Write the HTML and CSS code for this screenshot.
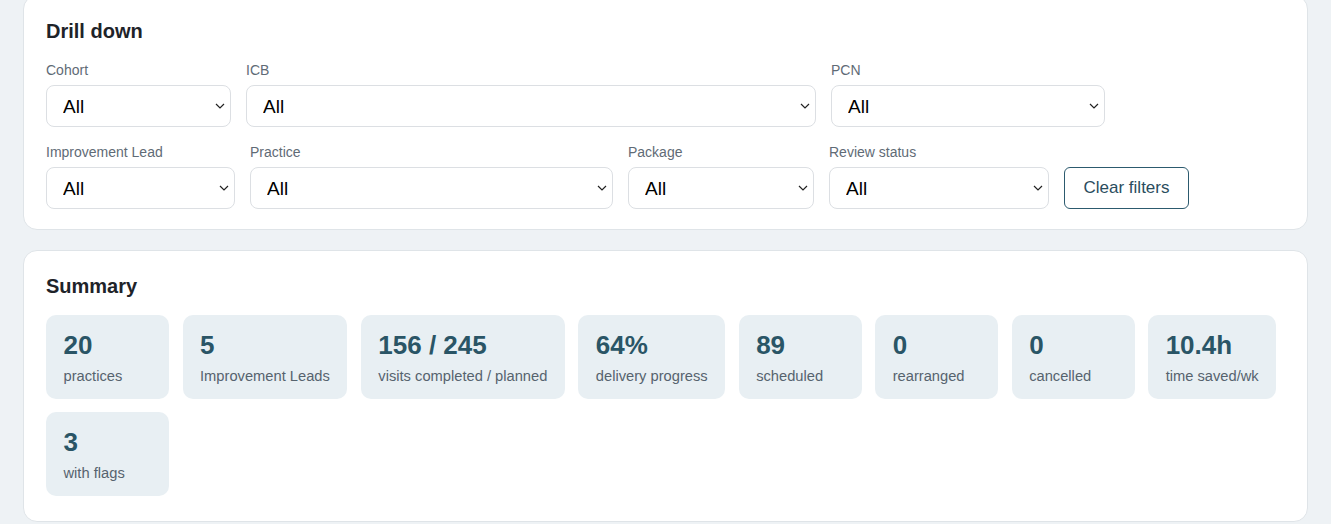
FILE: index.html
```html
<!DOCTYPE html>
<html>
<head>
  <title>Drill down</title>
  <link rel="stylesheet" href="styles.css">
</head>
<body>
  <div class="page">
    <section class="card filters-card">
      <h2>Drill down</h2>
      <div class="filter-row">
        <div class="field w-cohort">
          <label for="cohort">Cohort</label>
          <div class="select-wrap">
            <select id="cohort"><option>All</option></select>
            <svg class="chevron" viewBox="0 0 10 6" width="10" height="6"><path d="M1 1l4 4 4-4" fill="none" stroke="#222" stroke-width="1.2"/></svg>
          </div>
        </div>
        <div class="field w-icb">
          <label for="icb">ICB</label>
          <div class="select-wrap">
            <select id="icb"><option>All</option></select>
            <svg class="chevron" viewBox="0 0 10 6" width="10" height="6"><path d="M1 1l4 4 4-4" fill="none" stroke="#222" stroke-width="1.2"/></svg>
          </div>
        </div>
        <div class="field w-pcn">
          <label for="pcn">PCN</label>
          <div class="select-wrap">
            <select id="pcn"><option>All</option></select>
            <svg class="chevron" viewBox="0 0 10 6" width="10" height="6"><path d="M1 1l4 4 4-4" fill="none" stroke="#222" stroke-width="1.2"/></svg>
          </div>
        </div>
      </div>
      <div class="filter-row">
        <div class="field w-lead">
          <label for="lead">Improvement Lead</label>
          <div class="select-wrap">
            <select id="lead"><option>All</option></select>
            <svg class="chevron" viewBox="0 0 10 6" width="10" height="6"><path d="M1 1l4 4 4-4" fill="none" stroke="#222" stroke-width="1.2"/></svg>
          </div>
        </div>
        <div class="field w-practice">
          <label for="practice">Practice</label>
          <div class="select-wrap">
            <select id="practice"><option>All</option></select>
            <svg class="chevron" viewBox="0 0 10 6" width="10" height="6"><path d="M1 1l4 4 4-4" fill="none" stroke="#222" stroke-width="1.2"/></svg>
          </div>
        </div>
        <div class="field w-package">
          <label for="package">Package</label>
          <div class="select-wrap">
            <select id="package"><option>All</option></select>
            <svg class="chevron" viewBox="0 0 10 6" width="10" height="6"><path d="M1 1l4 4 4-4" fill="none" stroke="#222" stroke-width="1.2"/></svg>
          </div>
        </div>
        <div class="field w-review">
          <label for="review">Review status</label>
          <div class="select-wrap">
            <select id="review"><option>All</option></select>
            <svg class="chevron" viewBox="0 0 10 6" width="10" height="6"><path d="M1 1l4 4 4-4" fill="none" stroke="#222" stroke-width="1.2"/></svg>
          </div>
        </div>
        <button type="button" class="clear-btn">Clear filters</button>
      </div>
    </section>

    <section class="card summary-card">
      <h2>Summary</h2>
      <div class="stats">
        <div class="stat"><div class="stat-value">20</div><div class="stat-label">practices</div></div>
        <div class="stat"><div class="stat-value">5</div><div class="stat-label">Improvement Leads</div></div>
        <div class="stat"><div class="stat-value">156 / 245</div><div class="stat-label">visits completed / planned</div></div>
        <div class="stat"><div class="stat-value">64%</div><div class="stat-label">delivery progress</div></div>
        <div class="stat"><div class="stat-value">89</div><div class="stat-label">scheduled</div></div>
        <div class="stat"><div class="stat-value">0</div><div class="stat-label">rearranged</div></div>
        <div class="stat"><div class="stat-value">0</div><div class="stat-label">cancelled</div></div>
        <div class="stat"><div class="stat-value">10.4h</div><div class="stat-label">time saved/wk</div></div>
        <div class="stat"><div class="stat-value">3</div><div class="stat-label">with flags</div></div>
      </div>
    </section>
  </div>
</body>
</html>
```

FILE: styles.css
```css
* {
  box-sizing: border-box;
}
body {
  margin: 0;
  background-color: #eef2f5;
  font-family: "Liberation Sans", Arial, sans-serif;
  color: #1e2329;
}
.page {
  padding: 0 23px;
  margin-top: -5px;
  display: flex;
  flex-direction: column;
  gap: 20px;
}
.card {
  background-color: #fff;
  border: 1px solid #dfe4e8;
  border-radius: 14px;
  padding: 23px 22px 20px;
}
.summary-card {
  padding-bottom: 25px;
}
h2 {
  margin: 0 0 17px;
  font-size: 20px;
  line-height: 24px;
  font-weight: bold;
  color: #1e2329;
}
.filters-card h2 {
  margin-bottom: 19px;
}
.filter-row {
  display: flex;
  align-items: flex-end;
  gap: 15px;
}
.filter-row + .filter-row {
  margin-top: 17px;
}
.field {
  display: flex;
  flex-direction: column;
}
.field label {
  font-size: 14px;
  line-height: 17px;
  color: #5f6b76;
  margin-bottom: 6px;
}
.w-cohort { width: 185px; }
.w-icb { width: 570px; }
.w-pcn { width: 274px; }
.w-lead { width: 189px; }
.w-practice { width: 363px; }
.w-package { width: 186px; }
.w-review { width: 220px; }
.select-wrap {
  position: relative;
}
select {
  appearance: none;
  -webkit-appearance: none;
  width: 100%;
  height: 42px;
  padding: 0 30px 0 16px;
  border: 1px solid #dcdfe3;
  border-radius: 8px;
  background-color: #fff;
  font-family: "Liberation Sans", Arial, sans-serif;
  font-size: 19px;
  color: #000;
}
.chevron {
  position: absolute;
  right: 6px;
  top: 18px;
  pointer-events: none;
}
.clear-btn {
  height: 42px;
  width: 125px;
  border: 1px solid #2c5a6e;
  border-radius: 6px;
  background-color: #fff;
  color: #2a4d5e;
  font-family: "Liberation Sans", Arial, sans-serif;
  font-size: 17px;
  cursor: pointer;
}
.stats {
  display: flex;
  flex-wrap: wrap;
  gap: 13px 13.5px;
}
.stat {
  min-width: 123px;
  background-color: #e8eff3;
  border-radius: 10px;
  padding: 15px 17.5px 14px;
}
.stat-value {
  font-size: 26px;
  line-height: 31px;
  font-weight: bold;
  color: #2a5566;
  margin-bottom: 6px;
}
.stat-label {
  font-size: 14.7px;
  line-height: 18px;
  color: #56636e;
  white-space: nowrap;
}
```
